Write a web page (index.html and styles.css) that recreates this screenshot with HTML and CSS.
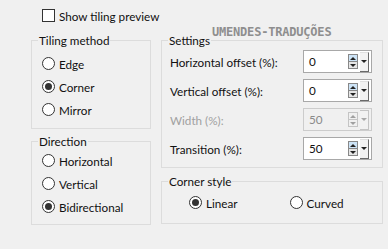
FILE: index.html
```html
<!DOCTYPE html>
<html lang="en">
<head>
    <meta charset="UTF-8">
    <title>Tiling</title>
    <link rel="stylesheet" href="styles.css">
</head>
<body>

    <div class="top">
        <span class="check"></span>
        <span>Show tiling preview</span>
    </div>

    <div class="watermark">UMENDES-TRADUÇÕES</div>

    <div class="columns">
        <div class="col-left">
            <fieldset class="group">
                <legend>Tiling method</legend>
                <div class="inner tiling">
                    <div class="option"><span class="radio"></span>Edge</div>
                    <div class="option"><span class="radio on"></span>Corner</div>
                    <div class="option"><span class="radio"></span>Mirror</div>
                </div>
            </fieldset>

            <fieldset class="group">
                <legend>Direction</legend>
                <div class="inner direction">
                    <div class="option"><span class="radio"></span>Horizontal</div>
                    <div class="option"><span class="radio"></span>Vertical</div>
                    <div class="option"><span class="radio on"></span>Bidirectional</div>
                </div>
            </fieldset>
        </div>

        <div class="col-right">
            <fieldset class="group">
                <legend>Settings</legend>
                <div class="inner settings">
                    <div class="row">
                        <span class="label">Horizontal offset (%):</span>
                        <div class="spin">
                            <div class="field"><span class="value">0</span><span class="bar"></span></div>
                            <div class="arrows"><span class="up"></span><span class="down"></span></div>
                            <div class="drop"></div>
                        </div>
                    </div>
                    <div class="row">
                        <span class="label">Vertical offset (%):</span>
                        <div class="spin">
                            <div class="field"><span class="value">0</span><span class="bar"></span></div>
                            <div class="arrows"><span class="up"></span><span class="down"></span></div>
                            <div class="drop"></div>
                        </div>
                    </div>
                    <div class="row disabled">
                        <span class="label">Width (%):</span>
                        <div class="spin">
                            <div class="field"><span class="value">50</span><span class="bar"></span></div>
                            <div class="arrows"><span class="up"></span><span class="down"></span></div>
                            <div class="drop"></div>
                        </div>
                    </div>
                    <div class="row">
                        <span class="label">Transition (%):</span>
                        <div class="spin">
                            <div class="field"><span class="value">50</span><span class="bar"></span></div>
                            <div class="arrows"><span class="up"></span><span class="down"></span></div>
                            <div class="drop"></div>
                        </div>
                    </div>
                </div>
            </fieldset>

            <fieldset class="group">
                <legend>Corner style</legend>
                <div class="inner corner">
                    <div class="option"><span class="radio on"></span>Linear</div>
                    <div class="option"><span class="radio"></span>Curved</div>
                </div>
            </fieldset>
        </div>
    </div>

</body>
</html>
```

FILE: styles.css
```css
body {
    margin: 0;
    width: 388px;
    height: 249px;
    background: #f0f0f0;
    font-family: Lato, "Noto Sans", sans-serif;
    font-size: 11.7px;
    line-height: 16px;
    color: #111;
    position: relative;
    overflow: hidden;
}
.top {
    display: flex;
    align-items: center;
    gap: 4px;
    height: 13px;
    padding: 9px 0 0 42px;
}
.check {
    width: 11px;
    height: 11px;
    border: 1px solid #333;
    background: #fff;
}
.watermark {
    position: absolute;
    left: 212px;
    top: 24px;
    font-family: "DejaVu Sans Mono", monospace;
    font-weight: bold;
    font-size: 12px;
    letter-spacing: -0.2px;
    color: #8e8e8e;
}
.columns {
    display: flex;
    gap: 10px;
    padding: 10px 0 0 31px;
}
.col-left {
    width: 120px;
    display: flex;
    flex-direction: column;
    gap: 4px;
}
.col-right {
    width: 222px;
    display: flex;
    flex-direction: column;
    gap: 5px;
}
.group {
    margin: 0;
    padding: 0;
    border: 1px solid #dcdcdc;
    min-width: 0;
}
.group legend {
    margin-left: 6px;
    padding: 0 1px;
    height: 16px;
}
.option {
    display: flex;
    align-items: center;
    gap: 4px;
    height: 23px;
}
.radio {
    width: 11px;
    height: 11px;
    border: 1px solid #333;
    border-radius: 50%;
    background: #fff;
    display: flex;
    align-items: center;
    justify-content: center;
}
.radio.on::after {
    content: "";
    width: 7px;
    height: 7px;
    border-radius: 50%;
    background: #333;
}
.inner.tiling {
    padding: 4px 0 7px 10px;
}
.inner.direction {
    padding: 0 0 6px 10px;
}
.inner.corner {
    display: flex;
    gap: 52px;
    padding: 2px 0 9px 27px;
}
.inner.settings {
    display: flex;
    flex-direction: column;
    gap: 6px;
    padding: 2px 10px 7px 8px;
}
.row {
    display: flex;
    align-items: center;
    justify-content: space-between;
}
.row.disabled .label {
    color: #a0a0a0;
}
.spin {
    width: 67px;
    height: 21px;
    border: 1px solid #a8a8a8;
    background: #fff;
    display: flex;
    align-items: center;
}
.row.disabled .spin {
    background: #f0f0f0;
    border-color: #cccccc;
}
.field {
    width: 33px;
    height: 21px;
    margin-left: 1px;
    display: flex;
    flex-direction: column;
}
.value {
    flex: 1;
    padding-left: 4px;
    line-height: 21px;
}
.row.disabled .value {
    color: #8a8a8a;
}
.bar {
    height: 3px;
    margin-bottom: 2px;
    background: #0078d7;
}
.arrows {
    width: 8px;
    height: 13px;
    margin-left: 10px;
    border: 1px solid #888;
    display: flex;
    flex-direction: column;
}
.arrows span {
    flex: 1;
    display: flex;
    align-items: center;
    justify-content: center;
}
.up {
    background: #cde4f7;
    border-bottom: 1px solid #888;
}
.down {
    background: #e6e6e6;
}
.up::after {
    content: "";
    border: 3px solid transparent;
    border-top: 0;
    border-bottom: 3px solid #222;
}
.down::after {
    content: "";
    border: 3px solid transparent;
    border-bottom: 0;
    border-top: 3px solid #222;
}
.row.disabled .arrows {
    border-color: #c4c4c4;
}
.row.disabled .up,
.row.disabled .down {
    background: #f0f0f0;
    border-color: #c4c4c4;
}
.row.disabled .up::after {
    border-bottom-color: #a0a0a0;
}
.row.disabled .down::after {
    border-top-color: #a0a0a0;
}
.drop {
    width: 8px;
    height: 18px;
    margin-left: 2px;
    background: #f2f2f2;
    border-right: 1px solid #6a6a6a;
    border-bottom: 1px solid #6a6a6a;
    border-top: 1px solid #e0e0e0;
    display: flex;
    align-items: center;
    justify-content: center;
}
.drop::after {
    content: "";
    border: 3px solid transparent;
    border-bottom: 0;
    border-top: 3px solid #222;
}
.row.disabled .drop {
    border-color: #c4c4c4;
}
.row.disabled .drop::after {
    border-top-color: #a8a8a8;
}
```
